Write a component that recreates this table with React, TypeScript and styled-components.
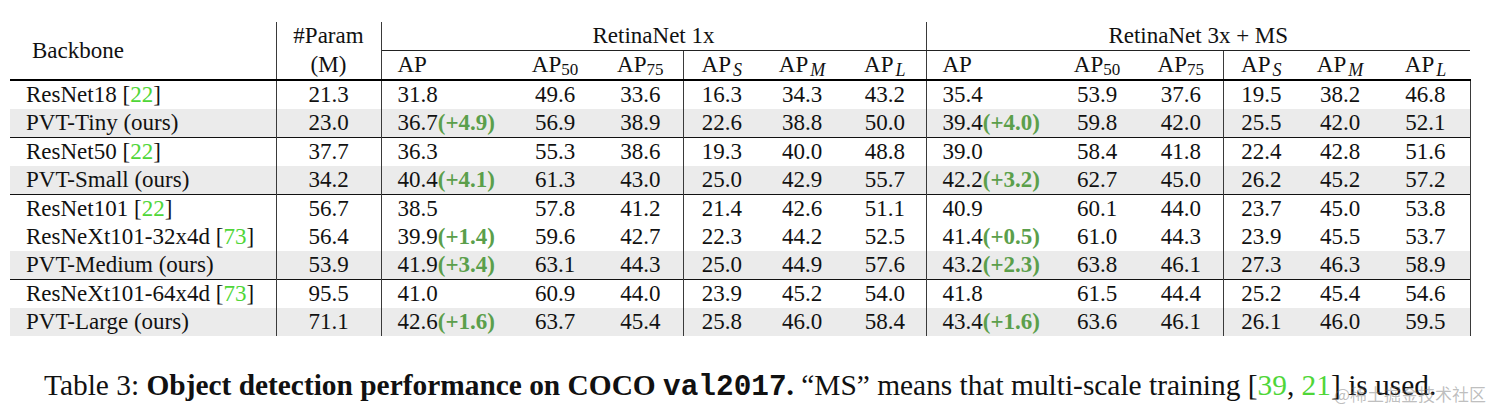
import React from 'react';
import styled, { createGlobalStyle } from 'styled-components';

const serif = `"Liberation Serif", Tinos, "Times New Roman", "DejaVu Serif", serif`;

const GlobalStyle = createGlobalStyle`
  html, body {
    margin: 0;
    padding: 0;
    background: #fff;
  }
  body {
    font-family: ${serif};
    color: #111;
  }
`;

const Page = styled.div`
  position: relative;
  width: 1492px;
  height: 410px;
  padding: 22px 0 0 10px;
  box-sizing: border-box;
  overflow: hidden;
  font-family: ${serif};
  color: #111;
`;

const Table = styled.table`
  width: 1460px;
  border-collapse: collapse;
  table-layout: fixed;
  font-family: ${serif};
  font-size: 23px;
  line-height: 28px;

  thead {
    border-bottom: 2px solid #000;
  }
`;

const Cell = styled.td<{ $left?: boolean; $pad?: number; $rule?: boolean }>`
  height: 28px;
  padding: 0 0 0 ${p => (p.$left ? p.$pad ?? 16 : 0)}px;
  text-align: ${p => (p.$left ? 'left' : 'center')};
  white-space: nowrap;
  border-right: ${p => (p.$rule ? '1px solid #3a3a3a' : 'none')};
  font-family: ${serif};
  font-weight: normal;
  line-height: 28px;
`;

const GroupHead = styled(Cell)`
  border-bottom: 1px solid #222;
`;

const Row = styled.tr<{ $shaded?: boolean; $top?: boolean }>`
  background: ${p => (p.$shaded ? '#ebebeb' : 'transparent')};
  border-top: ${p => (p.$top ? '1px solid #111' : 'none')};
`;

const Cite = styled.span`
  color: #4fd638;
`;

const Gain = styled.span`
  color: #5b9f4b;
  font-weight: bold;
`;

const NumSub = styled.span`
  position: relative;
  top: 3px;
  font-size: 17px;
  line-height: 0;
`;

const MathSub = styled.span`
  position: relative;
  top: 4px;
  margin-left: 2px;
  font-size: 18px;
  font-style: italic;
  line-height: 0;
`;

const Caption = styled.p`
  margin: 32px 0 0 34px;
  font-family: ${serif};
  font-size: 29.4px;
  line-height: 34px;
  white-space: nowrap;
`;

const Mono = styled.span`
  font-family: "Liberation Mono", Cousine, "Courier New", monospace;
  font-weight: bold;
`;

const Watermark = styled.div`
  position: absolute;
  right: 6px;
  top: 381px;
  font-family: "Noto Sans CJK SC", "Noto Sans", sans-serif;
  font-size: 17px;
  color: rgba(110, 110, 110, 0.45);
`;

const widths = [266, 105, 131, 86, 85, 77, 84, 82, 129, 84, 84, 76, 82, 89];

type Metric = { base: string; sub: string; math?: boolean };

const metrics: Metric[] = [
  { base: 'AP', sub: '' },
  { base: 'AP', sub: '50' },
  { base: 'AP', sub: '75' },
  { base: 'AP', sub: 'S', math: true },
  { base: 'AP', sub: 'M', math: true },
  { base: 'AP', sub: 'L', math: true },
];

type Entry = {
  name: string;
  cite?: string;
  param: string;
  ours?: boolean;
  one: string[];
  three: string[];
  gain?: [string, string];
};

const groups: Entry[][] = [
  [
    { name: 'ResNet18', cite: '22', param: '21.3', one: ['31.8', '49.6', '33.6', '16.3', '34.3', '43.2'], three: ['35.4', '53.9', '37.6', '19.5', '38.2', '46.8'] },
    { name: 'PVT-Tiny (ours)', ours: true, param: '23.0', one: ['36.7', '56.9', '38.9', '22.6', '38.8', '50.0'], three: ['39.4', '59.8', '42.0', '25.5', '42.0', '52.1'], gain: ['+4.9', '+4.0'] },
  ],
  [
    { name: 'ResNet50', cite: '22', param: '37.7', one: ['36.3', '55.3', '38.6', '19.3', '40.0', '48.8'], three: ['39.0', '58.4', '41.8', '22.4', '42.8', '51.6'] },
    { name: 'PVT-Small (ours)', ours: true, param: '34.2', one: ['40.4', '61.3', '43.0', '25.0', '42.9', '55.7'], three: ['42.2', '62.7', '45.0', '26.2', '45.2', '57.2'], gain: ['+4.1', '+3.2'] },
  ],
  [
    { name: 'ResNet101', cite: '22', param: '56.7', one: ['38.5', '57.8', '41.2', '21.4', '42.6', '51.1'], three: ['40.9', '60.1', '44.0', '23.7', '45.0', '53.8'] },
    { name: 'ResNeXt101-32x4d', cite: '73', param: '56.4', one: ['39.9', '59.6', '42.7', '22.3', '44.2', '52.5'], three: ['41.4', '61.0', '44.3', '23.9', '45.5', '53.7'], gain: ['+1.4', '+0.5'] },
    { name: 'PVT-Medium (ours)', ours: true, param: '53.9', one: ['41.9', '63.1', '44.3', '25.0', '44.9', '57.6'], three: ['43.2', '63.8', '46.1', '27.3', '46.3', '58.9'], gain: ['+3.4', '+2.3'] },
  ],
  [
    { name: 'ResNeXt101-64x4d', cite: '73', param: '95.5', one: ['41.0', '60.9', '44.0', '23.9', '45.2', '54.0'], three: ['41.8', '61.5', '44.4', '25.2', '45.4', '54.6'] },
    { name: 'PVT-Large (ours)', ours: true, param: '71.1', one: ['42.6', '63.7', '45.4', '25.8', '46.0', '58.4'], three: ['43.4', '63.6', '46.1', '26.1', '46.0', '59.5'], gain: ['+1.6', '+1.6'] },
  ],
];

function MetricLabel({ m }: { m: Metric }) {
  return (
    <>
      {m.base}
      {m.sub && (m.math ? <MathSub>{m.sub}</MathSub> : <NumSub>{m.sub}</NumSub>)}
    </>
  );
}

function Scores({ values, gain }: { values: string[]; gain?: string }) {
  return (
    <>
      {values.map((v, i) => (
        <Cell key={i} $left={i === 0} $rule={i === 2 || i === 5}>
          {v}
          {i === 0 && gain && <Gain>({gain})</Gain>}
        </Cell>
      ))}
    </>
  );
}

export default function App() {
  return (
    <Page>
      <GlobalStyle />
      <Table>
        <colgroup>
          {widths.map((w, i) => (
            <col key={i} style={{ width: w }} />
          ))}
        </colgroup>
        <thead>
          <tr>
            <Cell as="th" rowSpan={2} $left $pad={22} $rule>Backbone</Cell>
            <Cell as="th" $rule>#Param</Cell>
            <GroupHead as="th" colSpan={6} $rule>RetinaNet 1x</GroupHead>
            <GroupHead as="th" colSpan={6}>RetinaNet 3x + MS</GroupHead>
          </tr>
          <tr>
            <Cell as="th" $rule>(M)</Cell>
            {[0, 1].map(g =>
              metrics.map((m, i) => (
                <Cell as="th" key={`${g}-${i}`} $left={i === 0} $rule={i === 2 || (g === 0 && i === 5)}>
                  <MetricLabel m={m} />
                </Cell>
              ))
            )}
          </tr>
        </thead>
        <tbody>
          {groups.map((group, gi) =>
            group.map((e, ri) => (
              <Row key={e.name} $shaded={e.ours} $top={gi > 0 && ri === 0}>
                <Cell $left $rule>
                  {e.name}
                  {e.cite && (
                    <>
                      {' ['}
                      <Cite>{e.cite}</Cite>]
                    </>
                  )}
                </Cell>
                <Cell $rule>{e.param}</Cell>
                <Scores values={e.one} gain={e.gain?.[0]} />
                <Scores values={e.three} gain={e.gain?.[1]} />
              </Row>
            ))
          )}
        </tbody>
      </Table>
      <Caption>
        Table 3: <b>Object detection performance on COCO <Mono>val2017</Mono>.</b> “MS” means that
        multi-scale training [<Cite>39</Cite>, <Cite>21</Cite>] is used.
      </Caption>
      <Watermark>@稀土掘金技术社区</Watermark>
    </Page>
  );
}
